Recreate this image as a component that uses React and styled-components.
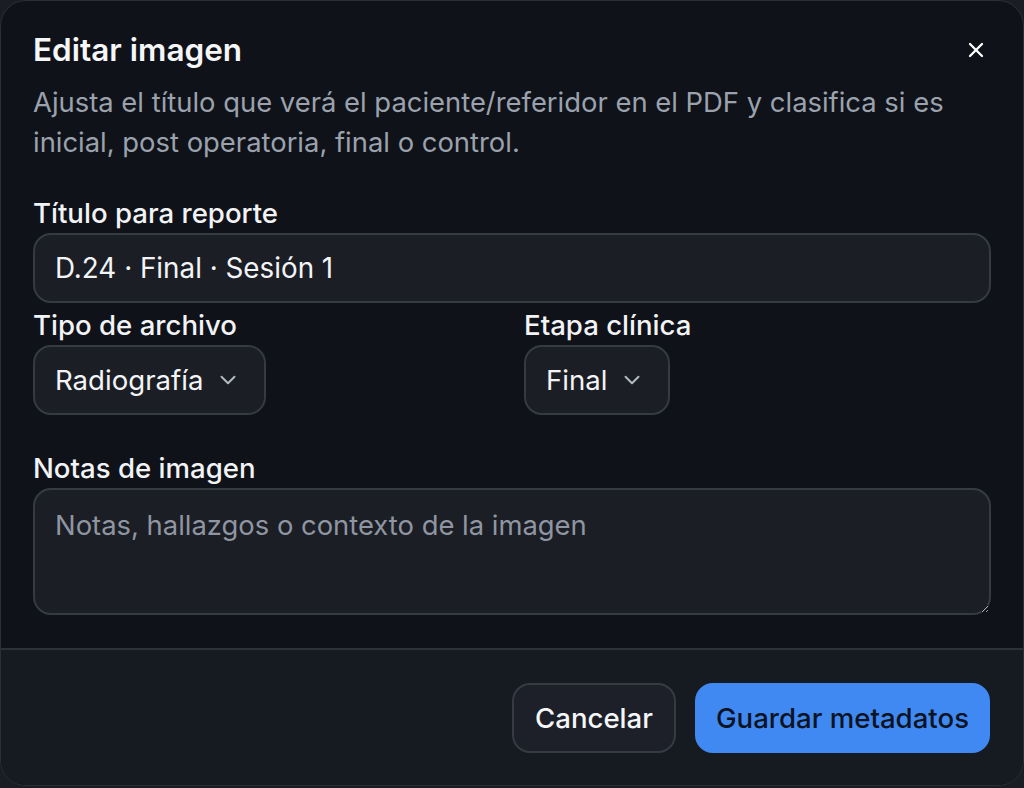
import styled, { createGlobalStyle } from "styled-components"

const GlobalStyle = createGlobalStyle`
  html, body {
    margin: 0;
    padding: 0;
    background: #1a1d24;
    font-family: Inter, "Noto Sans", "Liberation Sans", sans-serif;
    color-scheme: dark;
  }
  * { box-sizing: border-box; }
`

const Dialog = styled.div`
  width: 1024px;
  height: 786px;
  display: flex;
  flex-direction: column;
  background: #0f1218;
  border: 1px solid #2a2f38;
  border-radius: 26px;
  overflow: hidden;
`

const Body = styled.div`
  flex: 1;
  padding: 30px 32px 0 32px;
  display: flex;
  flex-direction: column;
`

const Header = styled.div`
  display: flex;
  justify-content: space-between;
  align-items: flex-start;
`

const Title = styled.h2`
  margin: 0;
  font-size: 31.5px;
  line-height: 38px;
  font-weight: 600;
  color: #f5f6f8;
`

const CloseButton = styled.button`
  background: none;
  border: none;
  padding: 0;
  margin: 7px 3px 0 0;
  width: 24px;
  height: 24px;
  color: #ffffff;
  display: flex;
  align-items: center;
  justify-content: center;
  cursor: pointer;
`

const Description = styled.p`
  margin: 13px 40px 0 0;
  font-size: 27.4px;
  line-height: 40px;
  color: #9ba2ad;
`

const Field = styled.div`
  display: flex;
  flex-direction: column;
  margin-top: ${(p) => p.$top || 0}px;
`

const Label = styled.label`
  font-size: 27.6px;
  line-height: 32px;
  font-weight: 500;
  color: #f2f3f5;
  margin-bottom: 4px;
`

const TextInput = styled.input`
  height: 70px;
  width: 100%;
  padding: 0 20px;
  font: inherit;
  font-size: 27.8px;
  color: #f3f4f6;
  background: #1b1e25;
  border: 2px solid #353a43;
  border-radius: 18px;
  outline: none;
`

const Row = styled.div`
  display: grid;
  grid-template-columns: 1fr 1fr;
  column-gap: 24px;
  margin-top: 6px;
`

const SelectButton = styled.button`
  align-self: flex-start;
  height: 70px;
  display: inline-flex;
  align-items: center;
  gap: 12px;
  padding: 0 23px 0 20px;
  font: inherit;
  font-size: 27.6px;
  color: #f3f4f6;
  background: #1b1e25;
  border: 2px solid #353a43;
  border-radius: 18px;
  cursor: pointer;
`

const Chevron = () => (
  <svg width="26" height="26" viewBox="0 0 24 24" fill="none" stroke="#b4b9c2" strokeWidth="1.8" strokeLinecap="round" strokeLinejoin="round">
    <path d="m6 9 6 6 6-6" />
  </svg>
)

const TextArea = styled.textarea`
  height: 127px;
  width: 100%;
  padding: 16px 20px;
  font: inherit;
  font-size: 27.4px;
  line-height: 38px;
  color: #f3f4f6;
  background: #1b1e25;
  border: 2px solid #353a43;
  border-radius: 18px;
  outline: none;
  resize: vertical;

  &::placeholder {
    color: #8f96a1;
  }
`

const Footer = styled.div`
  display: flex;
  justify-content: flex-end;
  gap: 19px;
  padding: 33px 33px 32px;
  background: #161a21;
  border-top: 2px solid #2c313a;
`

const Button = styled.button`
  height: 70px;
  padding: 0 ${(p) => (p.$primary ? 19 : 21)}px;
  font: inherit;
  font-size: 27.6px;
  font-weight: 500;
  border-radius: 18px;
  cursor: pointer;
  color: ${(p) => (p.$primary ? "#0c1322" : "#f5f6f8")};
  background: ${(p) => (p.$primary ? "#4189f2" : "#1d2028")};
  border: 2px solid ${(p) => (p.$primary ? "#4189f2" : "#353a43")};
`

const App = () => {
  return (
    <>
      <GlobalStyle />
      <Dialog>
        <Body>
          <Header>
            <Title>Editar imagen</Title>
            <CloseButton aria-label="Cerrar">
              <svg width="24" height="24" viewBox="0 0 24 24" fill="none" stroke="currentColor" strokeWidth="2.3" strokeLinecap="round">
                <path d="M18 6 6 18" />
                <path d="m6 6 12 12" />
              </svg>
            </CloseButton>
          </Header>
          <Description>
            Ajusta el título que verá el paciente/referidor en el PDF y clasifica si es inicial, post operatoria, final o control.
          </Description>

          <Field $top={35}>
            <Label>Título para reporte</Label>
            <TextInput defaultValue="D.24 · Final · Sesión 1" />
          </Field>

          <Row>
            <Field>
              <Label>Tipo de archivo</Label>
              <SelectButton>
                Radiografía <Chevron />
              </SelectButton>
            </Field>
            <Field>
              <Label>Etapa clínica</Label>
              <SelectButton>
                Final <Chevron />
              </SelectButton>
            </Field>
          </Row>

          <Field $top={37}>
            <Label>Notas de imagen</Label>
            <TextArea placeholder="Notas, hallazgos o contexto de la imagen" />
          </Field>
        </Body>
        <Footer>
          <Button>Cancelar</Button>
          <Button $primary>Guardar metadatos</Button>
        </Footer>
      </Dialog>
    </>
  )
}

export default App
